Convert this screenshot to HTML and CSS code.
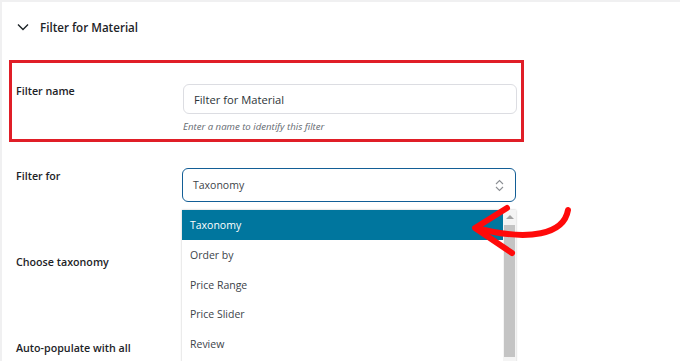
FILE: index.html
```html
<!DOCTYPE html>
<html>
<head>
<meta charset="utf-8">
<link rel="stylesheet" href="styles.css">
</head>
<body>
<div class="page">
  <div class="header">
    <svg class="chev" width="12" height="8" viewBox="0 0 12 8"><path d="M1 1.5 L6 6.5 L11 1.5" fill="none" stroke="#1d2327" stroke-width="1.4"/></svg>
    <span class="title">Filter for Material</span>
  </div>
  <div class="highlight">
    <div class="row row-name">
      <div class="label">Filter name</div>
      <div class="field">
        <div class="input">Filter for Material</div>
        <div class="help">Enter a name to identify this filter</div>
      </div>
    </div>
  </div>
  <div class="row row-for">
    <div class="label">Filter for</div>
    <div class="field">
      <div class="select">
        <span>Taxonomy</span>
        <svg class="updown" width="9" height="13" viewBox="0 0 9 13"><path d="M1 5 L4.5 1.5 L8 5 M1 8 L4.5 11.5 L8 8" fill="none" stroke="#8c8f94" stroke-width="1.1"/></svg>
      </div>
      <div class="dropdown">
        <div class="options">
          <div class="opt selected">Taxonomy</div>
          <div class="opt">Order by</div>
          <div class="opt">Price Range</div>
          <div class="opt">Price Slider</div>
          <div class="opt">Review</div>
        </div>
        <div class="scrollbar">
          <div class="sb-up"></div>
          <div class="sb-thumb"></div>
        </div>
      </div>
    </div>
  </div>
  <div class="row row-tax">
    <div class="label">Choose taxonomy</div>
  </div>
  <div class="row row-auto">
    <div class="label">Auto-populate with all</div>
  </div>
  <svg class="arrow" width="680" height="361" viewBox="0 0 680 361">
    <path d="M568 210 C 564 234, 530 242, 476 228" fill="none" stroke="#ff0a0a" stroke-width="6" stroke-linecap="round"/>
    <path d="M507 208 L 475 228 L 512 253" fill="none" stroke="#ff0a0a" stroke-width="6" stroke-linecap="round" stroke-linejoin="round"/>
  </svg>
</div>
</body>
</html>
```
FILE: styles.css
```css
html, body {
  margin: 0;
  padding: 0;
  background: #fff;
}
.page {
  position: relative;
  width: 680px;
  height: 361px;
  box-sizing: border-box;
  border-top: 2px solid #f0f0f1;
  border-left: 2px solid #f0f0f1;
  overflow: hidden;
  font-family: "Open Sans", "Noto Sans", sans-serif;
  color: #1d2327;
}
.header {
  display: flex;
  align-items: center;
  height: 50px;
  padding-left: 15px;
}
.chev {
  margin-right: 11px;
}
.title {
  font-size: 11.6px;
  font-weight: 600;
}
.highlight {
  margin-left: 7px;
  margin-top: 8px;
  width: 515px;
  height: 82px;
  box-sizing: border-box;
  border: 3px solid #e01e27;
}
.row {
  display: flex;
}
.label {
  font-size: 10.7px;
  font-weight: 600;
  color: #1d2327;
}
.row-name {
  padding: 21px 4px 0 4px;
}
.row-name .label {
  width: 167px;
  padding-top: 0;
}
.field {
  width: 334px;
  position: relative;
}
.input {
  height: 30px;
  box-sizing: border-box;
  border: 1px solid #dcdde2;
  border-radius: 6px;
  padding-left: 10px;
  display: flex;
  align-items: center;
  font-size: 11.2px;
  color: #2c3338;
}
.help {
  margin-top: 6px;
  font-size: 9.6px;
  font-style: italic;
  color: #646970;
}
.row-for {
  padding: 26px 0 0 14px;
}
.row-for .label {
  width: 166px;
  padding-top: 1px;
}
.select {
  height: 34px;
  box-sizing: border-box;
  border: 1.3px solid #135e96;
  border-radius: 6px;
  padding: 0 11px 0 10px;
  display: flex;
  align-items: center;
  justify-content: space-between;
  font-size: 10.5px;
  color: #3c434a;
}
.dropdown {
  position: absolute;
  left: 0;
  top: 42px;
  width: 334px;
  height: 160px;
  background: #fff;
  display: flex;
  box-shadow: 0 0 2px rgba(0,0,0,0.25);
  z-index: 2;
}
.options {
  flex: 1;
}
.opt {
  height: 29.5px;
  display: flex;
  align-items: center;
  padding-left: 8px;
  font-size: 10.5px;
  color: #3c434a;
}
.opt:nth-child(2) {
  padding-top: 1px;
}
.opt.selected {
  background: #00769e;
  color: #fff;
}
.scrollbar {
  width: 13px;
  background: #f4f4f4;
  display: flex;
  flex-direction: column;
  align-items: center;
}
.sb-up {
  width: 0;
  height: 0;
  margin-top: 5px;
  border-left: 4px solid transparent;
  border-right: 4px solid transparent;
  border-bottom: 4px solid #a3a3a3;
}
.sb-thumb {
  margin-top: 6px;
  width: 11px;
  height: 132px;
  background: #c4c4c4;
}
.row-tax {
  padding: 53px 0 0 14px;
}
.row-auto {
  padding: 72px 0 0 14px;
}
.arrow {
  position: absolute;
  left: -2px;
  top: -2px;
  z-index: 3;
  pointer-events: none;
}
```
